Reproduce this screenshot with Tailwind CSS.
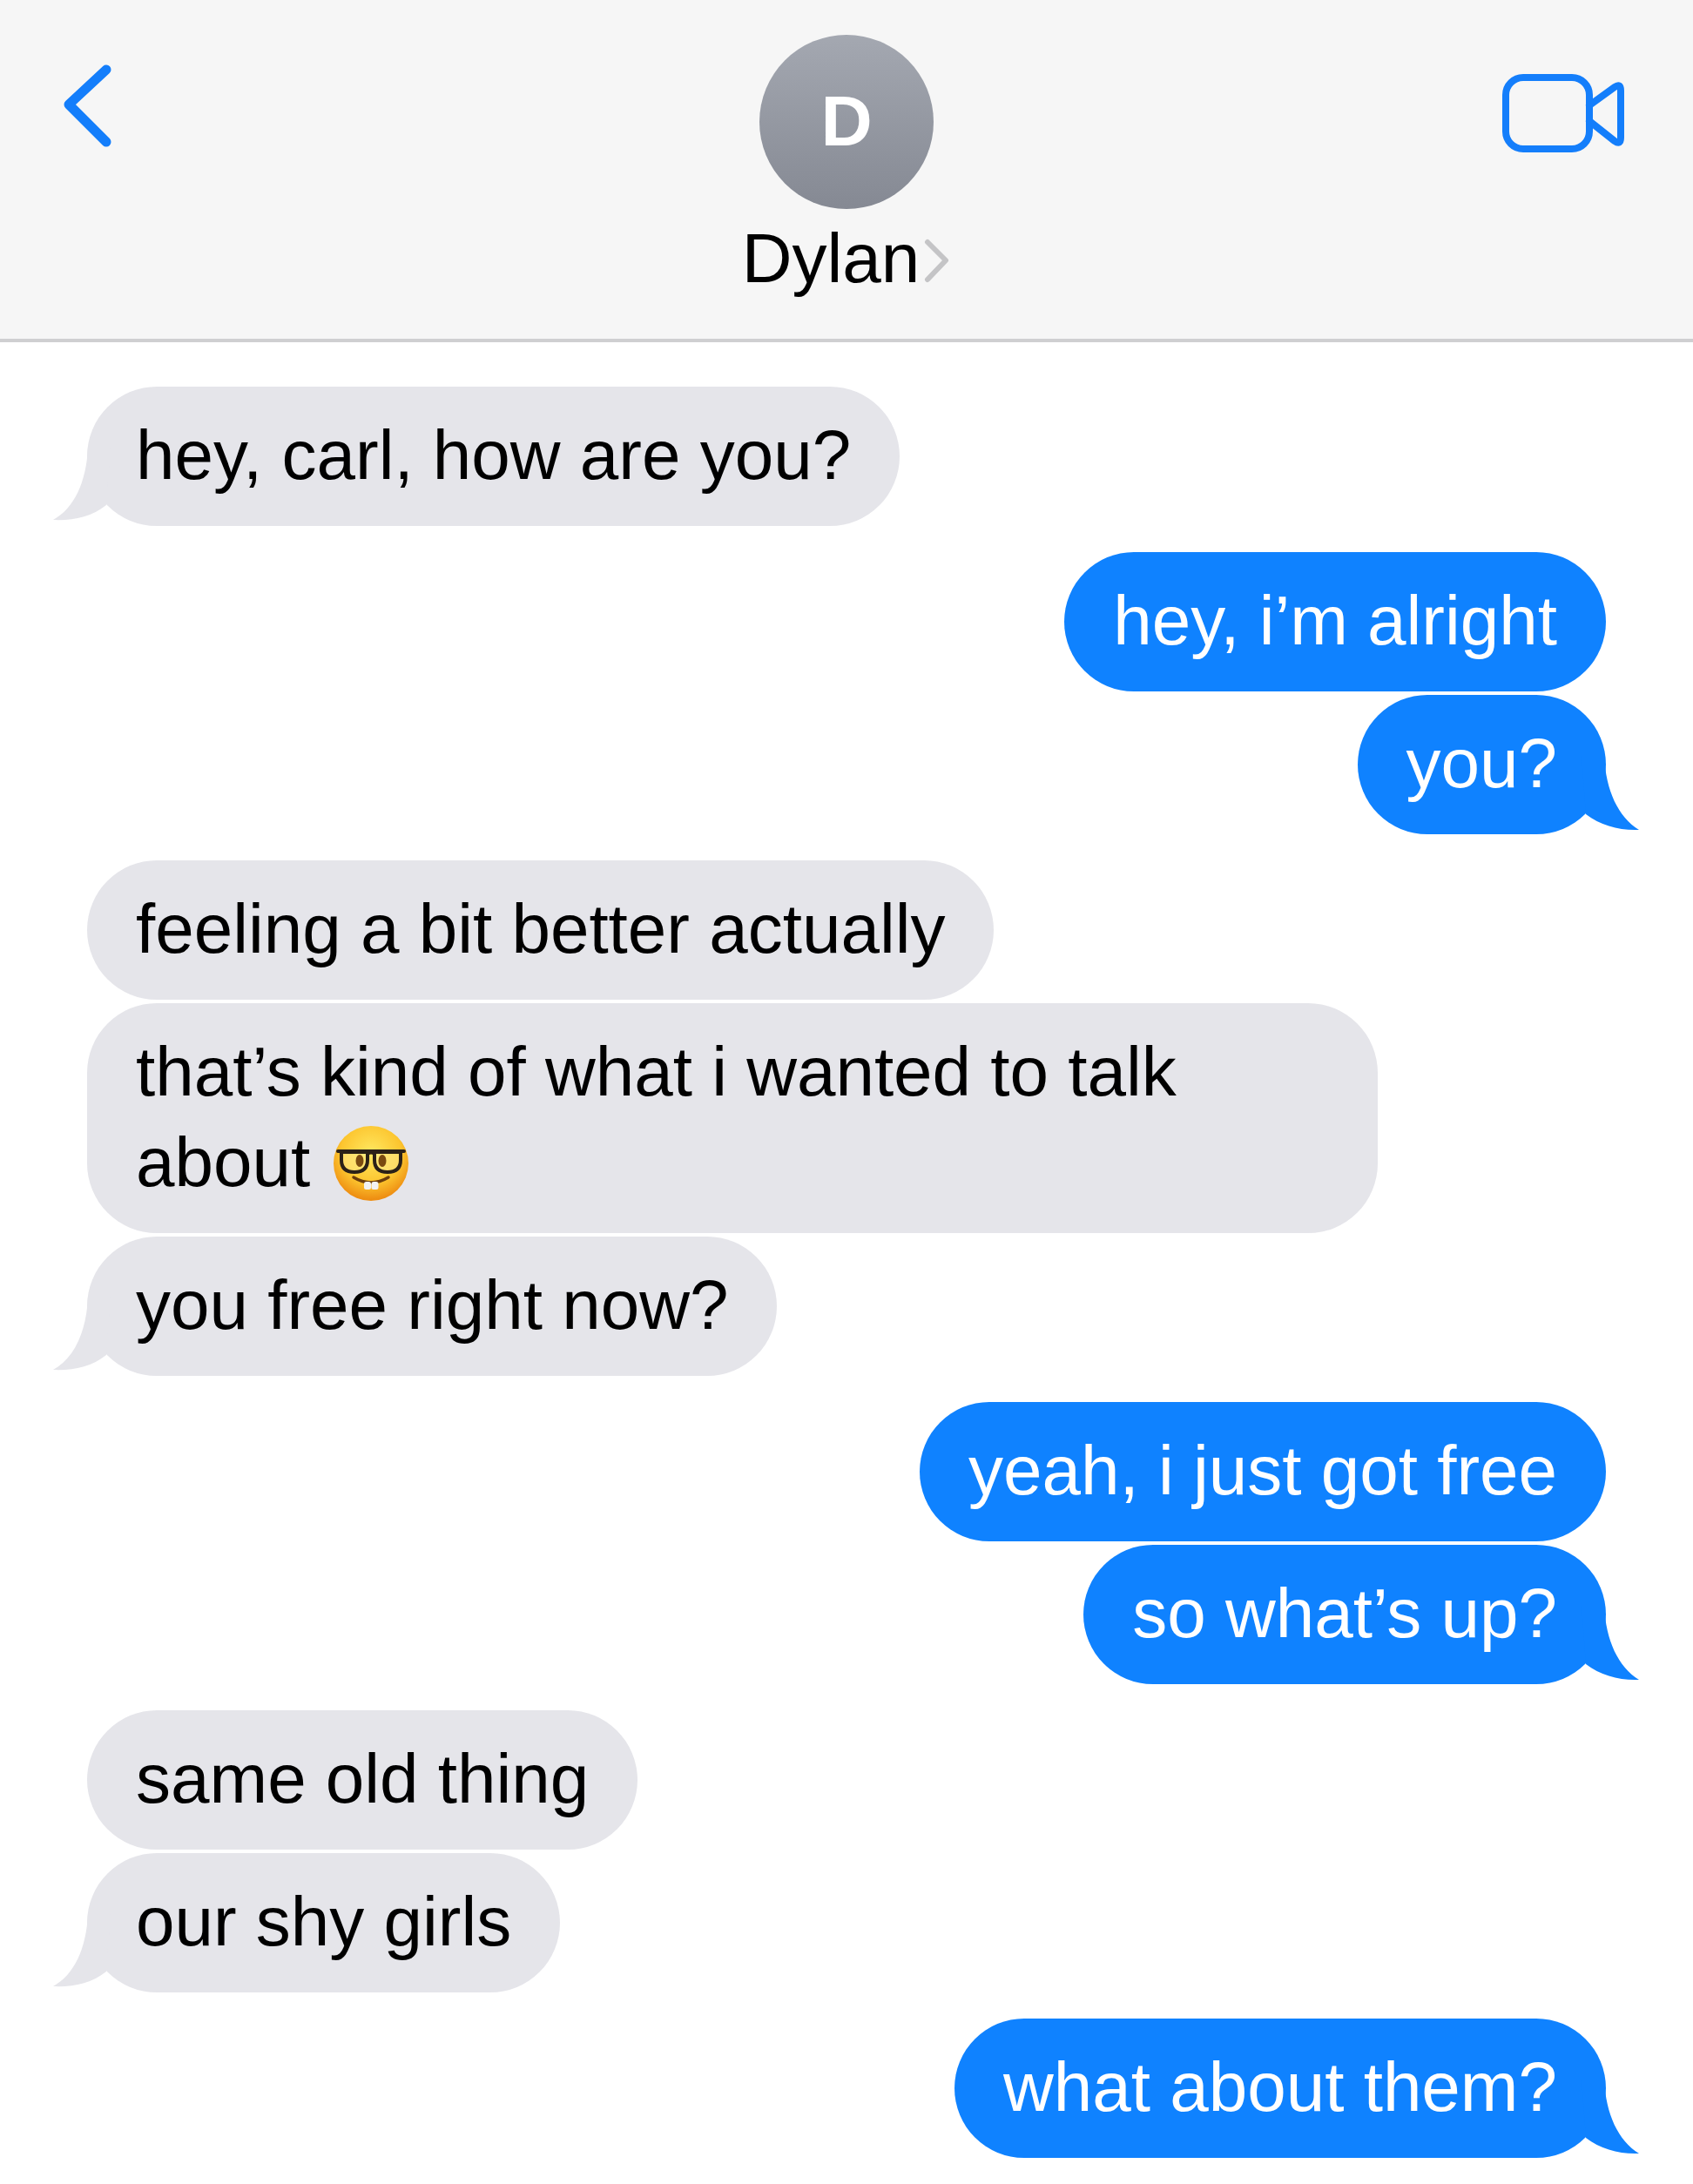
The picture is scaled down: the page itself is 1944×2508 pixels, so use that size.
<!DOCTYPE html>
<html lang="en">

<head>
    <meta charset="UTF-8" />
    <title>Messages</title>
    <script src="https://cdn.jsdelivr.net/npm/@tailwindcss/browser@4"></script>
</head>

<body class="bg-white font-['Liberation_Sans',Arial,sans-serif]">
    <div class="w-[1944px] h-[2508px] overflow-hidden flex flex-col">
        <!-- header -->
        <header class="h-[393px] shrink-0 bg-[#f6f6f6] border-b-4 border-[#cfcfd1] grid grid-cols-[1fr_auto_1fr]">
            <div class="pt-[70px] pl-[66px]">
                <svg class="w-[70px] h-[104px]" viewBox="0 0 70 104" fill="none" stroke="#147efb" stroke-width="11" stroke-linecap="round" stroke-linejoin="round">
                    <path d="M56 10 L13 50 L56 93" />
                </svg>
            </div>
            <div class="flex flex-col items-center pt-[40px]">
                <div class="w-[200px] h-[200px] rounded-full bg-gradient-to-b from-[#a4a8b1] to-[#858993] flex items-center justify-center text-white font-bold text-[82px] pb-[3px]">D</div>
                <div class="flex items-center mt-[11px] ml-[2px] text-[80px] leading-[92px] text-black">
                    <span>Dylan</span>
                    <svg class="w-[34px] h-[52px] ml-[4px] mt-[6px]" viewBox="0 0 34 52" fill="none" stroke="#c4c4c6" stroke-width="6" stroke-linecap="round" stroke-linejoin="round">
                        <path d="M5 4 L26 25 L5 47" />
                    </svg>
                </div>
            </div>
            <div class="flex justify-end pt-[77px] pr-[76px]">
                <svg class="w-[146px] h-[100px]" viewBox="0 0 146 100" fill="none" stroke="#147efb" stroke-width="8" stroke-linecap="round" stroke-linejoin="round">
                    <rect x="7" y="12" width="96" height="82" rx="20" />
                    <path d="M103 44 L132 23 Q139 18 139 27 L139 81 Q139 90 132 85 L103 62" />
                </svg>
            </div>
        </header>

        <!-- messages -->
        <main class="flex flex-col pt-[51px] pl-[100px] pr-[100px] text-[80px] leading-[104px]">
            <!-- group 1 -->
            <div class="relative self-start px-[56px] pt-[27px] pb-[29px] rounded-[80px] bg-[#e5e5ea] text-black">
                hey, carl, how are you?
                <svg class="absolute left-[-39px] bottom-0 w-[70px] h-[90px]" viewBox="0 0 70 90" fill="#e5e5ea"><path d="M40 0 C38 40 24 70 0 83 C22 84 44 80 61 66 L66 0 Z" /></svg>
            </div>

            <div class="mt-[30px] flex flex-col items-end gap-[4px] text-white">
                <div class="px-[56px] pt-[27px] pb-[29px] rounded-[80px] bg-[#0f82ff]">hey, i’m alright</div>
                <div class="relative px-[56px] pt-[27px] pb-[29px] rounded-[80px] bg-[#0f82ff]">
                    you?
                    <svg class="absolute right-[-38px] bottom-0 w-[70px] h-[90px]" viewBox="0 0 70 90" fill="#0f82ff"><path d="M30 0 C32 40 46 70 70 85 C48 86 26 80 9 67 L4 0 Z" /></svg>
                </div>
            </div>

            <div class="mt-[30px] flex flex-col items-start gap-[4px] text-black">
                <div class="px-[56px] pt-[27px] pb-[29px] rounded-[80px] bg-[#e5e5ea]">feeling a bit better actually</div>
                <div class="w-[1482px] px-[56px] pt-[27px] pb-[29px] rounded-[80px] bg-[#e5e5ea]">
                    that’s kind of what i wanted to talk<br />
                    about
                    <svg class="inline-block align-[-18px] ml-[4px] w-[88px] h-[88px]" viewBox="0 0 88 88">
                        <defs>
                            <radialGradient id="face" cx="50%" cy="36%" r="62%">
                                <stop offset="0%" stop-color="#ffe860" />
                                <stop offset="65%" stop-color="#fcc52f" />
                                <stop offset="100%" stop-color="#ee8e12" />
                            </radialGradient>
                        </defs>
                        <circle cx="44" cy="44" r="43" fill="url(#face)" />
                        <g fill="#ffef9a" fill-opacity=".5" stroke="#2b2118" stroke-width="4" stroke-linejoin="round">
                            <path d="M10 31 H40 V40 Q40 54 25 54 Q10 54 10 40 Z" />
                            <path d="M48 31 H78 V40 Q78 54 63 54 Q48 54 48 40 Z" />
                        </g>
                        <path d="M6 30 H82 M40 33 Q44 30 48 33" stroke="#2b2118" stroke-width="4" fill="none" stroke-linecap="round" />
                        <ellipse cx="31" cy="41" rx="4.5" ry="7" fill="#7a4a10" />
                        <ellipse cx="57" cy="41" rx="4.5" ry="7" fill="#7a4a10" />
                        <path d="M24 60 Q44 72 64 60" stroke="#6b3d0c" stroke-width="3.5" fill="none" stroke-linecap="round" />
                        <rect x="36" y="65" width="8" height="9" rx="2.5" fill="#f2f2f2" />
                        <rect x="44.5" y="65" width="8" height="9" rx="2.5" fill="#f2f2f2" />
                    </svg>
                </div>
                <div class="relative px-[56px] pt-[27px] pb-[29px] rounded-[80px] bg-[#e5e5ea]">
                    you free right now?
                    <svg class="absolute left-[-39px] bottom-0 w-[70px] h-[90px]" viewBox="0 0 70 90" fill="#e5e5ea"><path d="M40 0 C38 40 24 70 0 83 C22 84 44 80 61 66 L66 0 Z" /></svg>
                </div>
            </div>

            <div class="mt-[30px] flex flex-col items-end gap-[4px] text-white">
                <div class="px-[56px] pt-[27px] pb-[29px] rounded-[80px] bg-[#0f82ff]">yeah, i just got free</div>
                <div class="relative px-[56px] pt-[27px] pb-[29px] rounded-[80px] bg-[#0f82ff]">
                    so what’s up?
                    <svg class="absolute right-[-38px] bottom-0 w-[70px] h-[90px]" viewBox="0 0 70 90" fill="#0f82ff"><path d="M30 0 C32 40 46 70 70 85 C48 86 26 80 9 67 L4 0 Z" /></svg>
                </div>
            </div>

            <div class="mt-[30px] flex flex-col items-start gap-[4px] text-black">
                <div class="px-[56px] pt-[27px] pb-[29px] rounded-[80px] bg-[#e5e5ea]">same old thing</div>
                <div class="relative px-[56px] pt-[27px] pb-[29px] rounded-[80px] bg-[#e5e5ea]">
                    our shy girls
                    <svg class="absolute left-[-39px] bottom-0 w-[70px] h-[90px]" viewBox="0 0 70 90" fill="#e5e5ea"><path d="M40 0 C38 40 24 70 0 83 C22 84 44 80 61 66 L66 0 Z" /></svg>
                </div>
            </div>

            <div class="mt-[30px] flex flex-col items-end text-white">
                <div class="relative px-[56px] pt-[27px] pb-[29px] rounded-[80px] bg-[#0f82ff]">
                    what about them?
                    <svg class="absolute right-[-38px] bottom-0 w-[70px] h-[90px]" viewBox="0 0 70 90" fill="#0f82ff"><path d="M30 0 C32 40 46 70 70 85 C48 86 26 80 9 67 L4 0 Z" /></svg>
                </div>
            </div>
        </main>
    </div>
</body>

</html>
